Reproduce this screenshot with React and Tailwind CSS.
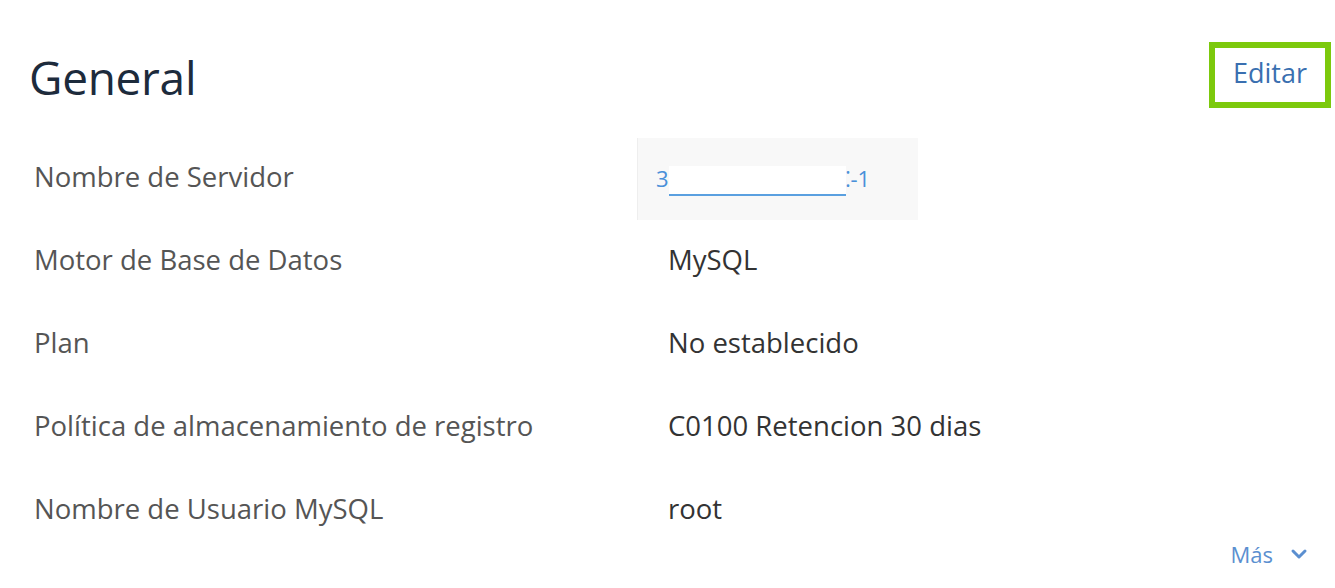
import React from 'react';
import { ChevronDown } from 'lucide-react';

const ROWS = [
  { label: 'Motor de Base de Datos', value: 'MySQL' },
  { label: 'Plan', value: 'No establecido' },
  { label: 'Política de almacenamiento de registro', value: 'C0100 Retencion 30 dias' },
  { label: 'Nombre de Usuario MySQL', value: 'root' },
];

export default function App() {
  return (
    <div className="w-[1335px] h-[588px] bg-white overflow-hidden" style={{ fontFamily: '"Open Sans", "Noto Sans", sans-serif' }}>
      <div className="flex justify-between pl-[29px] pr-[4px] pt-[42px] h-[137px] items-start">
        <h1 className="text-[46px] leading-[70px] text-[#1d2b3c] tracking-[-0.3px]">General</h1>
        <button className="w-[122px] h-[66px] border-[6px] border-[#7cc90c] flex items-center justify-center pb-[4px] text-[27px] text-[#3a6fb0]">
          Editar
        </button>
      </div>

      <div className="flex flex-col">
        <div className="flex items-center h-[83px]">
          <div className="w-[637px] pl-[34px] text-[27.5px] text-[#555] pb-[4px]">Nombre de Servidor</div>
          <div className="w-[281px] h-[82px] bg-[#f8f8f8] border-l border-[#eeeeee] flex items-center pl-[18px] text-[22px] text-[#4a90d9]">
            <span>3</span>
            <span className="inline-block w-[177px] h-[30px] bg-white border-b-[2px] border-[#5aa0e0] mt-[4px]"></span>
            <span>⁚-1</span>
          </div>
        </div>
        {ROWS.map(r => (
          <div key={r.label} className="flex items-center h-[83px]">
            <div className="w-[637px] pl-[34px] text-[27.5px] text-[#555] pb-[4px]">{r.label}</div>
            <div className="pl-[31px] text-[27.5px] text-[#333] pb-[4px]">{r.value}</div>
          </div>
        ))}
      </div>

      <div className="flex justify-end items-center gap-[14px] pr-[24px] -mt-[13px] h-[30px] text-[22px] text-[#5b8fd0]">
        <span>Más</span>
        <ChevronDown className="w-[24px] h-[24px]" strokeWidth={3} />
      </div>
    </div>
  );
}
